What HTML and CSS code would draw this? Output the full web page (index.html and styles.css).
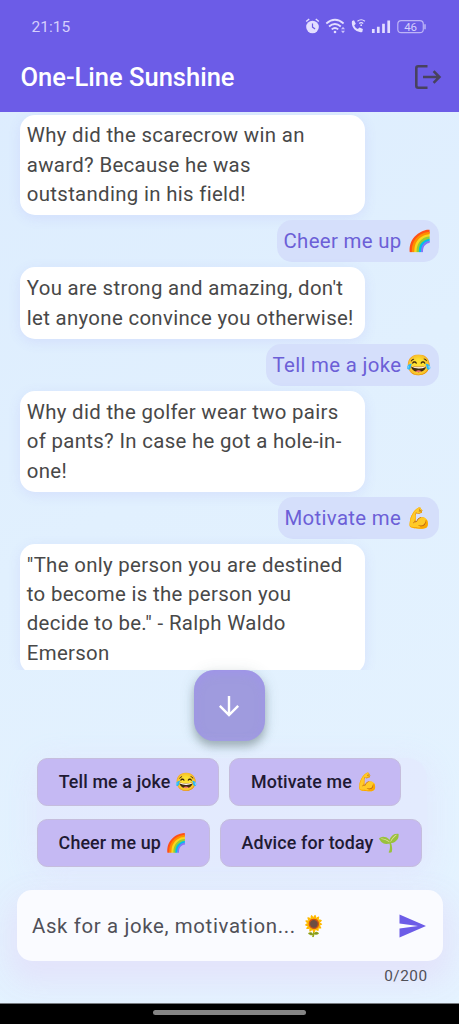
FILE: index.html
```html
<!DOCTYPE html>
<html lang="en">
<head>
<meta charset="utf-8">
<title>One-Line Sunshine</title>
<link rel="stylesheet" href="styles.css">
</head>
<body>
<div class="app">
  <header class="header">
    <div class="status">
      <span class="time">21:15</span>
      <svg class="status-icons" viewBox="0 0 124 20" width="124" height="20" fill="none" stroke="#e3deff" stroke-width="1.6">
        <circle cx="7.500" cy="11" r="6.300" fill="#e3deff" stroke="none"/>
        <path d="M7.500 7.500v3.600l2.600 1.800" stroke="#6c5ce7" stroke-width="1.200"/>
        <path d="M1.200 5.500l3-2.500M13.800 5.500l-3-2.500" stroke-width="1.500"/>
        <path d="M21.300 7.500q8.700-7.500 17.300 0M24 10.500q5.900-5 11.800 0M26.700 13.400q3.300-2.800 6.500 0" stroke-width="1.800"/>
        <circle cx="30" cy="16" r="1.300" fill="#e3deff" stroke="none"/>
        <path d="M36 13.300l2-2.500 2 2.500zM36 14.700l2 2.500 2-2.500z" fill="#cbc3fb" stroke="none"/>
        <path d="M47 5l2-.8 1.800 3.500-1.600 1.700q1.200 2.700 3.600 3.700l1.800-1.700 3.300 1.600-.6 3q-4.800.9-8-2.700T47 5z" fill="#e3deff" stroke="none"/>
        <path d="M52.500 5.300q3.700-3.100 7.400 0M54.200 7.500q2-1.700 4 0" stroke-width="1.200"/>
        <circle cx="56.200" cy="9.200" r=".9" fill="#e3deff" stroke="none"/>
        <path d="M68.300 17v-4M73.300 17v-6.200M78.500 17v-9.200M83.700 17v-12.500" stroke-width="2.700"/>
        <rect x="92.800" y="4.700" width="25.500" height="12" rx="3.500" stroke="#bdb4f7" stroke-width="1.200"/>
        <path d="M120 8.200v5" stroke="#bdb4f7" stroke-width="1.500"/>
        <text class="battery" x="105.600" y="14.800" text-anchor="middle">46</text>
      </svg>
    </div>
    <div class="titlebar">
      <h1 class="title">One-Line Sunshine</h1>
      <svg class="logout" viewBox="0 0 28 26" width="28" height="26" fill="none" stroke="#48425f" stroke-width="2.600">
        <path d="M13.500 2.300H4.200Q2.300 2.300 2.300 4.200V21.800Q2.300 23.700 4.200 23.700H13.500M9 13H25.500M19.600 7.200L25.400 13L19.600 18.800"/>
      </svg>
    </div>
  </header>

  <main class="chat">
    <p class="msg bot">Why did the scarecrow win an<br>award? Because he was<br>outstanding in his field!</p>
    <p class="msg user cheer">Cheer me up 🌈</p>
    <p class="msg bot">You are strong and amazing, don't<br>let anyone convince you otherwise!</p>
    <p class="msg user joke">Tell me a joke 😂</p>
    <p class="msg bot">Why did the golfer wear two pairs<br>of pants? In case he got a hole-in-<br>one!</p>
    <p class="msg user motivate">Motivate me 💪</p>
    <p class="msg bot">"The only person you are destined<br>to become is the person you<br>decide to be." - Ralph Waldo<br>Emerson</p>
  </main>

  <section class="scroll-row">
    <button class="scroll-down" aria-label="Scroll down">
      <svg viewBox="0 0 24 24" width="24" height="24" fill="none" stroke="#fff" stroke-width="2.400"><path d="M12 2V20.500M2.800 11.800L12 21L21.200 11.800"/></svg>
    </button>
  </section>

  <section class="suggestions">
    <button class="chip chip-joke">Tell me a joke 😂</button>
    <button class="chip chip-motivate">Motivate me 💪</button>
    <button class="chip chip-cheer">Cheer me up 🌈</button>
    <button class="chip chip-advice">Advice for today 🌱</button>
  </section>

  <section class="composer">
    <div class="input">
      <span>Ask for a joke, motivation... 🌻</span>
      <svg viewBox="0 0 27 24" width="27" height="24" fill="#6c5ce7"><path d="M.5.500L27 12L.5 23.500V14.600L19 12L.5 9.400z"/></svg>
    </div>
    <div class="counter">0/200</div>
  </section>

  <footer class="navbar"><div class="handle"></div></footer>
</div>
</body>
</html>
```

FILE: styles.css
```css
* { box-sizing: border-box; }

body {
  margin: 0;
  font-family: Roboto, "Noto Color Emoji", sans-serif;
}

.app {
  display: flex;
  flex-direction: column;
  width: 459px;
  height: 1024px;
  overflow: hidden;
  background: linear-gradient(150deg, #dcecfe 0%, #e1f0fe 45%, #e5f3ff 100%);
}

.header {
  flex: none;
  height: 112px;
  background: #6c5ce7;
}

.status {
  display: flex;
  justify-content: space-between;
  padding: 16px 30px 0 31.500px;
  height: 44px;
}

.time {
  font-size: 15.500px;
  line-height: 22px;
  color: #d5cffc;
}

.battery {
  font: 11.500px Roboto, sans-serif;
  fill: #d5cffc;
  stroke: none;
}

.titlebar {
  display: flex;
  justify-content: space-between;
  align-items: center;
  height: 66px;
  padding: 0 17px 0 20.500px;
}

.title {
  margin: 0;
  font-size: 25.500px;
  font-weight: 500;
  line-height: 32px;
  color: #fff;
}

.chat {
  flex: none;
  display: flex;
  flex-direction: column;
  align-items: flex-start;
  gap: 5.100px;
  height: 558px;
  padding: 2.600px 20.400px 0;
  overflow: hidden;
}

.msg {
  flex: none;
  margin: 0;
  padding: 6.900px 6.400px 5.900px;
  border-radius: 15px;
  font-size: 20.400px;
  line-height: 29.300px;
  letter-spacing: .32px;
  white-space: nowrap;
}

.bot {
  width: 344.500px;
  background: #fff;
  color: #484848;
  box-shadow: 0 3px 13px rgba(108, 92, 231, .1);
}

.user {
  align-self: flex-end;
  height: 42px;
  background: #d5dffb;
  color: #6c5fd7;
}

.cheer { width: 161.500px; }
.joke { width: 172.500px; }
.motivate { width: 160.500px; }

.scroll-row {
  flex: none;
  display: flex;
  justify-content: center;
  height: 88px;
}

.scroll-down {
  display: grid;
  place-items: center;
  width: 71.400px;
  height: 71px;
  padding: 0;
  border: 0;
  border-radius: 20.400px;
  background: #9f9bde;
  box-shadow: 0 6px 9px rgba(70, 90, 90, .38), 0 2px 16px rgba(60, 90, 100, .14), inset 0 3px 10px rgba(160, 145, 240, .7);
}

.suggestions {
  flex: none;
  display: flex;
  flex-wrap: wrap;
  align-content: flex-start;
  gap: 12.800px 10.200px;
  width: 390px;
  height: 109px;
  margin-left: 37px;
  border-radius: 20px;
  background: rgba(226, 230, 253, .6);
  box-shadow: 0 6px 26px 4px rgba(226, 230, 253, .75);
}

.chip {
  height: 48.300px;
  padding: 0;
  border: 1.300px solid #c5bddd;
  border-radius: 10.200px;
  background: #c5b9f3;
  color: #211a33;
  font: 500 17.850px/46px Roboto, "Noto Color Emoji", sans-serif;
  letter-spacing: .13px;
  white-space: nowrap;
}

.chip-joke { width: 182px; }
.chip-motivate { width: 171.500px; }
.chip-cheer { width: 172.500px; }
.chip-advice { width: 202.500px; }

.composer {
  flex: 1;
  padding: 23px 16.500px 0;
}

.input {
  display: flex;
  align-items: center;
  justify-content: space-between;
  height: 71px;
  padding: 0 17px 0 15.500px;
  border-radius: 15px;
  background: #fafbff;
  box-shadow: 0 14px 28px 8px rgba(227, 227, 251, .95);
  color: #505058;
  font-size: 20.400px;
  letter-spacing: .64px;
  white-space: nowrap;
}

.counter {
  position: relative;
  padding: 5px 15px 0 0;
  text-align: right;
  font-size: 15.300px;
  line-height: 20px;
  letter-spacing: .51px;
  color: #505058;
}

.navbar {
  position: relative;
  flex: none;
  display: flex;
  justify-content: center;
  height: 21px;
  padding-top: 6px;
  border-top: 1px solid #777b80;
  background: #000;
}

.handle {
  width: 153px;
  height: 5px;
  border-radius: 3px;
  background: #858585;
}
```
